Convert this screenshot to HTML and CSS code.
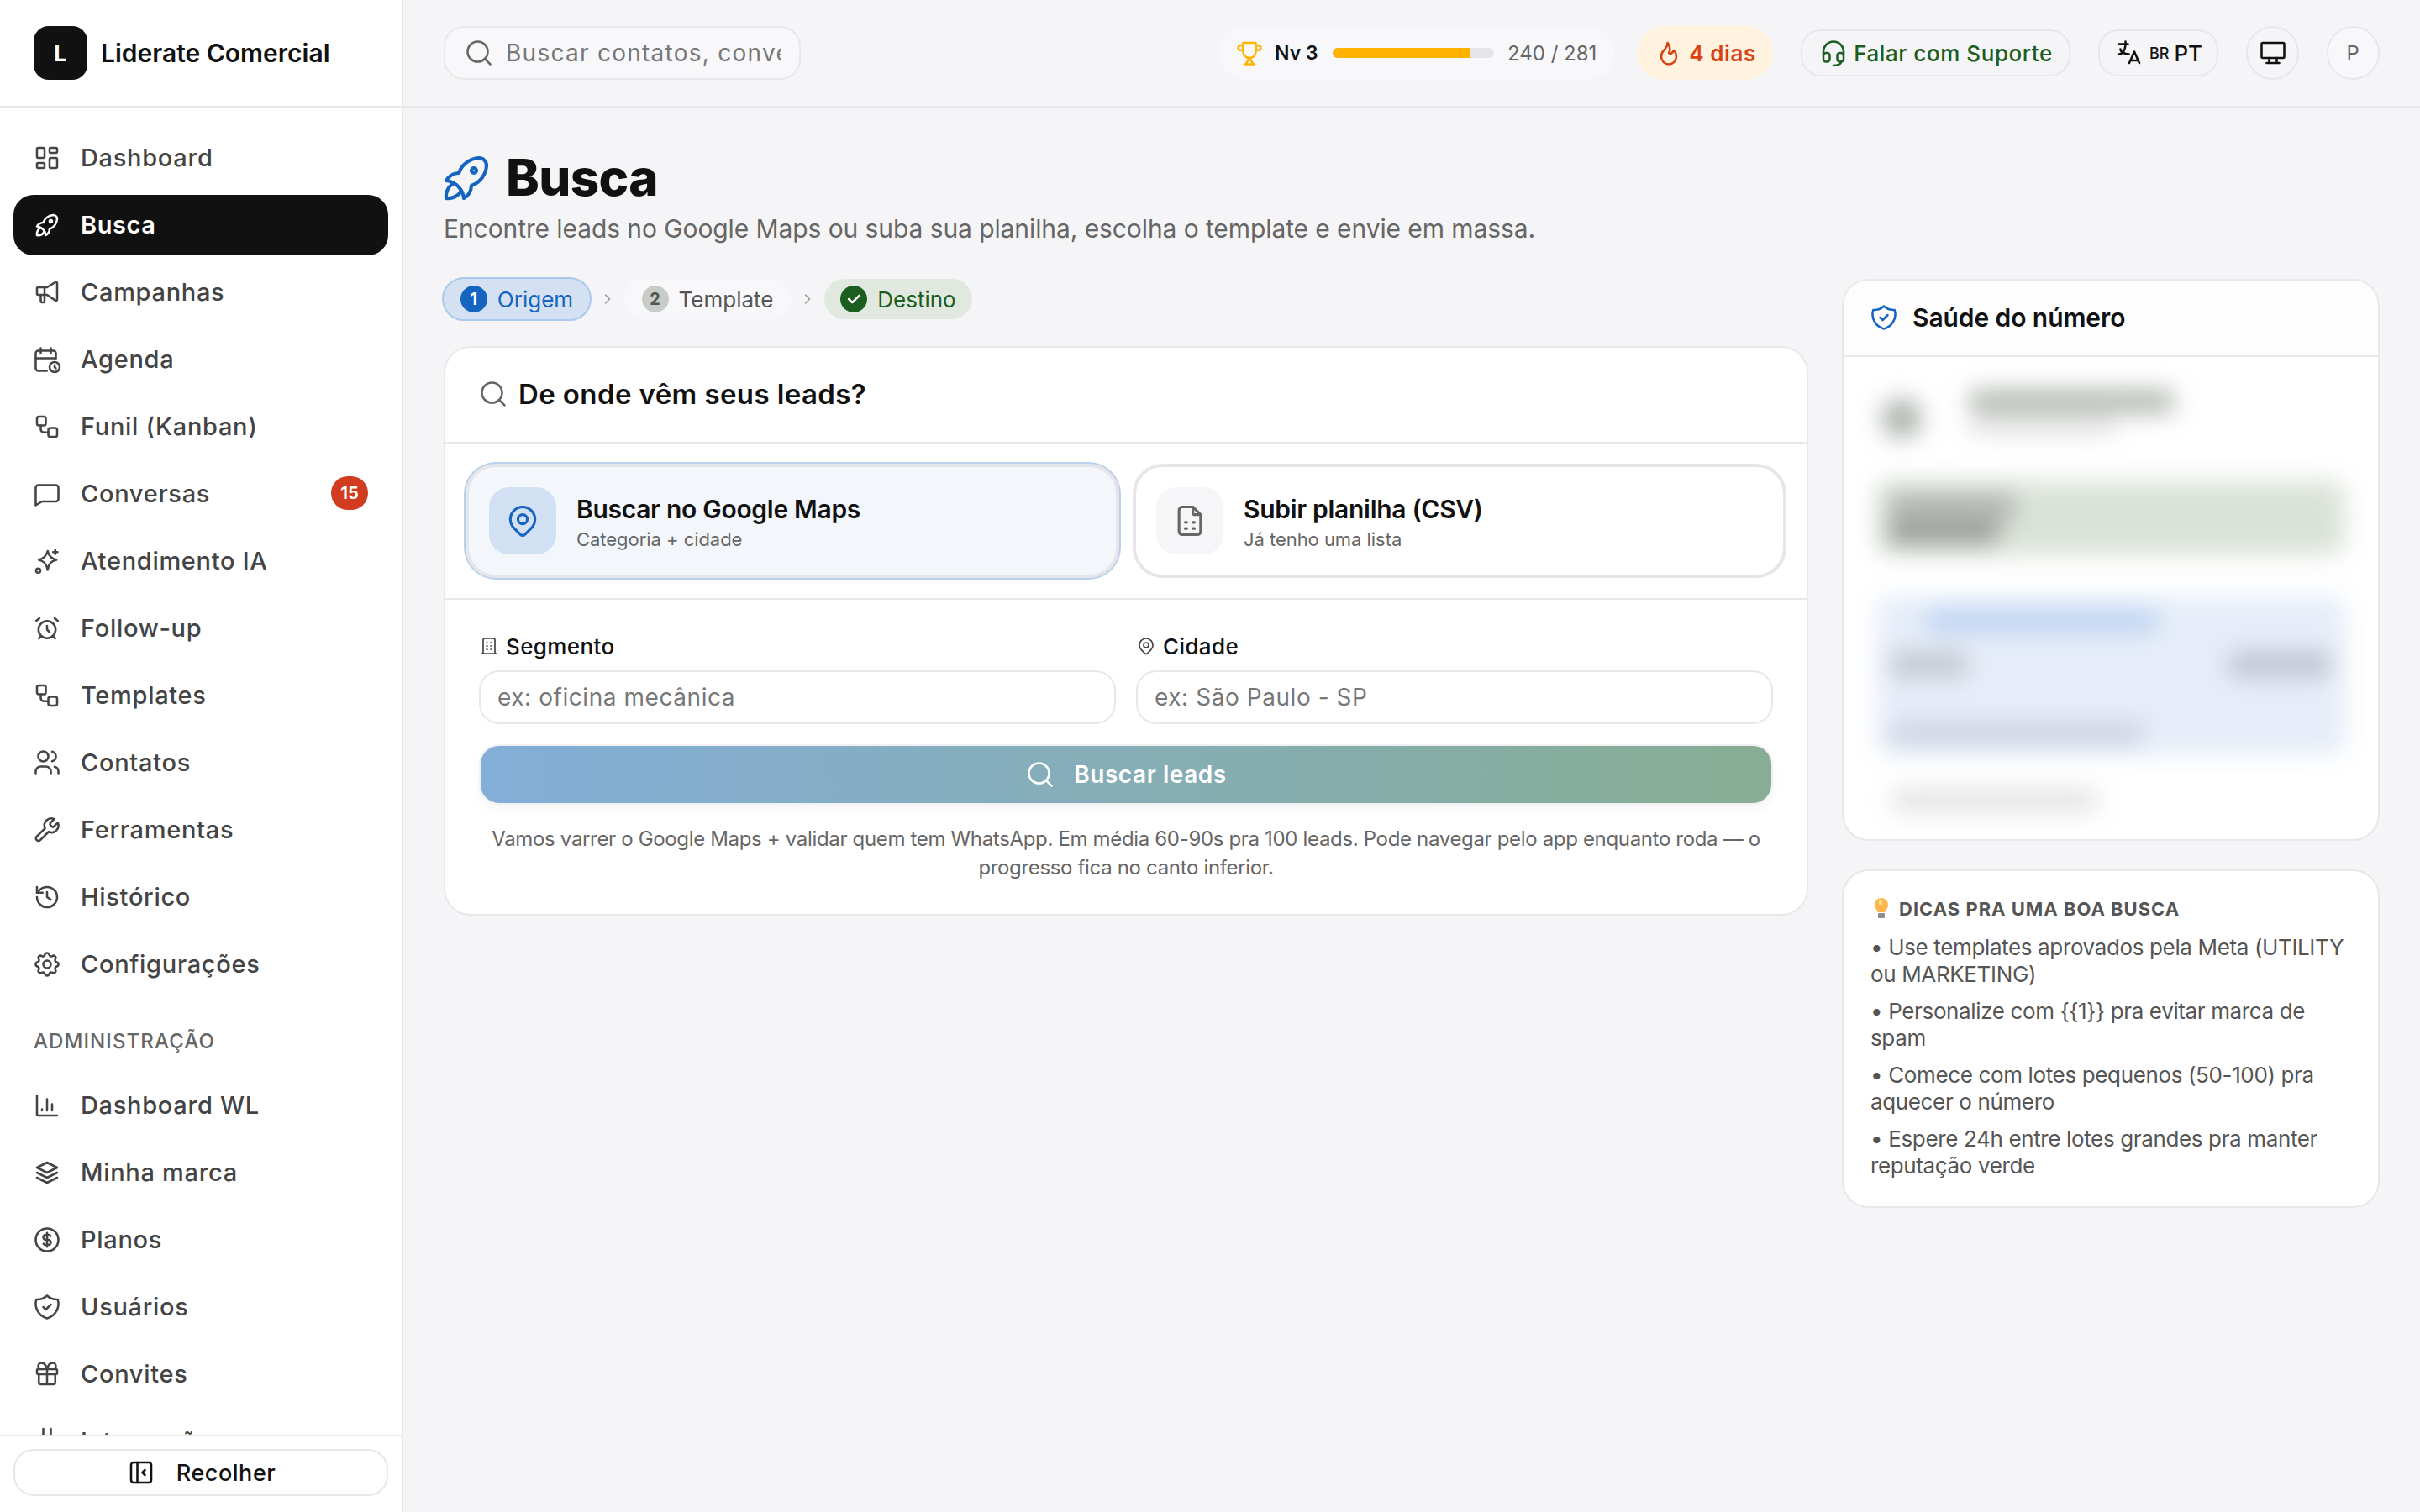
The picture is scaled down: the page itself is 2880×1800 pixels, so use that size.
FILE: index.html
```html
<!DOCTYPE html>
<html lang="pt-BR">
<head>
    <meta charset="UTF-8">
    <title>Busca - Liderate Comercial</title>
    <link rel="stylesheet" href="styles.css">
</head>
<body>
    <svg class="sprite" xmlns="http://www.w3.org/2000/svg">
        <symbol id="i-dashboard" viewBox="0 0 24 24"><path d="M5 4h4a1 1 0 0 1 1 1v6a1 1 0 0 1-1 1H5a1 1 0 0 1-1-1V5a1 1 0 0 1 1-1M5 16h4a1 1 0 0 1 1 1v2a1 1 0 0 1-1 1H5a1 1 0 0 1-1-1v-2a1 1 0 0 1 1-1M15 12h4a1 1 0 0 1 1 1v6a1 1 0 0 1-1 1h-4a1 1 0 0 1-1-1v-6a1 1 0 0 1 1-1M15 4h4a1 1 0 0 1 1 1v2a1 1 0 0 1-1 1h-4a1 1 0 0 1-1-1V5a1 1 0 0 1 1-1"/></symbol>
        <symbol id="i-rocket" viewBox="0 0 24 24"><path d="M4 13a8 8 0 0 1 7 7a6 6 0 0 0 3-5a9 9 0 0 0 6-8a3 3 0 0 0-3-3a9 9 0 0 0-8 6a6 6 0 0 0-5 3"/><path d="M7 14a6 6 0 0 0-3 6a6 6 0 0 0 6-3"/><circle cx="15" cy="9" r="1"/></symbol>
        <symbol id="i-megaphone" viewBox="0 0 24 24"><path d="M10 8v11a1 1 0 0 1-1 1H8a1 1 0 0 1-1-1v-5"/><path d="M12 8l6.500-4a.9.9 0 0 1 1.500.7v13a.9.9 0 0 1-1.500.7L12 14H5a1 1 0 0 1-1-1V9a1 1 0 0 1 1-1h7"/></symbol>
        <symbol id="i-calendar" viewBox="0 0 24 24"><path d="M11.800 21H5a2 2 0 0 1-2-2V7a2 2 0 0 1 2-2h12a2 2 0 0 1 2 2v4"/><circle cx="18" cy="18" r="4"/><path d="M15 3v4M7 3v4M3 11h16M18 16.500V18l1 1"/></symbol>
        <symbol id="i-flow" viewBox="0 0 24 24"><rect x="4" y="4" width="7" height="7" rx="1.500"/><rect x="13" y="13" width="7" height="7" rx="1.500"/><path d="M7 11v3a2.500 2.500 0 0 0 2.500 2.500H13"/></symbol>
        <symbol id="i-message" viewBox="0 0 24 24"><path d="M21 16a2 2 0 0 1-2 2H8l-5 3V7a2 2 0 0 1 2-2h14a2 2 0 0 1 2 2z"/></symbol>
        <symbol id="i-sparkles" viewBox="0 0 24 24"><path d="M12.500 4c.7 4 2.700 6 7 7-4.300 1-6.300 3-7 8-1-5-3-7-7-8 4-1 6-3 7-7z"/><path d="M18.500 3v3.500M16.800 4.800h3.500"/><circle cx="5" cy="19.500" r="1.700"/></symbol>
        <symbol id="i-alarm" viewBox="0 0 24 24"><circle cx="12" cy="13" r="6.800"/><path d="M12 10v3l2 2M6 4 3.500 6M18 4l2.500 2M7.400 18.300 5.500 20M16.600 18.300 18.500 20"/></symbol>
        <symbol id="i-users" viewBox="0 0 24 24"><circle cx="9" cy="7" r="4"/><path d="M3 21v-2a4 4 0 0 1 4-4h4a4 4 0 0 1 4 4v2M16 3.130a4 4 0 0 1 0 7.750M21 21v-2a4 4 0 0 0-3-3.850"/></symbol>
        <symbol id="i-wrench" viewBox="0 0 24 24"><path d="M14.700 6.800a1 1 0 0 0 0 1.400l1.200 1.200a1 1 0 0 0 1.400 0l3.200-3.200a5.500 5.500 0 0 1-7.300 7.300l-6.600 6.600a1.950 1.950 0 0 1-2.800-2.800l6.600-6.600a5.500 5.500 0 0 1 7.300-7.300l-3.200 3.200z"/></symbol>
        <symbol id="i-history" viewBox="0 0 24 24"><path d="M4 12a8 8 0 1 0 8-8 8.700 8.700 0 0 0-6 2.400L4 8.500"/><path d="M4 4v4.500h4.500M12 8v4l3 2"/></symbol>
        <symbol id="i-settings" viewBox="0 0 24 24"><path d="M10.325 4.317c.426-1.756 2.924-1.756 3.350 0a1.724 1.724 0 0 0 2.573 1.066c1.543-.94 3.310.826 2.370 2.370a1.724 1.724 0 0 0 1.065 2.572c1.756.426 1.756 2.924 0 3.350a1.724 1.724 0 0 0-1.066 2.573c.94 1.543-.826 3.310-2.370 2.370a1.724 1.724 0 0 0-2.572 1.065c-.426 1.756-2.924 1.756-3.350 0a1.724 1.724 0 0 0-2.573-1.066c-1.543.94-3.310-.826-2.370-2.370a1.724 1.724 0 0 0-1.065-2.572c-1.756-.426-1.756-2.924 0-3.350a1.724 1.724 0 0 0 1.066-2.573c-.94-1.543.826-3.310 2.370-2.370c1 .608 2.296.07 2.572-1.065z"/><circle cx="12" cy="12" r="3"/></symbol>
        <symbol id="i-chart" viewBox="0 0 24 24"><path d="M4 4v15a1 1 0 0 0 1 1h15M8 16v-1M12 16V7M16 16v-5"/></symbol>
        <symbol id="i-stack" viewBox="0 0 24 24"><path d="M12 4 4 8l8 4 8-4zM4 12l8 4 8-4M4 16l8 4 8-4"/></symbol>
        <symbol id="i-coin" viewBox="0 0 24 24"><circle cx="12" cy="12" r="9"/><path d="M14.800 9a2 2 0 0 0-1.800-1h-2a2 2 0 1 0 0 4h2a2 2 0 1 1 0 4h-2a2 2 0 0 1-1.800-1M12 6.500v11"/></symbol>
        <symbol id="i-shield" viewBox="0 0 24 24"><path d="M12 3a12 12 0 0 0 8.500 3a12 12 0 0 1-8.500 15a12 12 0 0 1-8.500-15a12 12 0 0 0 8.500-3"/><path d="m9 12 2 2 4-4"/></symbol>
        <symbol id="i-gift" viewBox="0 0 24 24"><rect x="4" y="8" width="16" height="4" rx="1"/><path d="M12 8v12M18.500 12v6.500a1.500 1.500 0 0 1-1.500 1.500H7a1.500 1.500 0 0 1-1.500-1.500V12M7.500 8a2.500 2.500 0 0 1 0-5a4.800 8 0 0 1 4.500 5a4.800 8 0 0 1 4.500-5a2.500 2.500 0 0 1 0 5"/></symbol>
        <symbol id="i-plug" viewBox="0 0 24 24"><path d="M9 2v6M15 2v6M6 8h12v3a6 6 0 0 1-12 0zM12 17v5"/></symbol>
        <symbol id="i-collapse" viewBox="0 0 24 24"><rect x="4" y="4" width="16" height="16" rx="2"/><path d="M9 4v16M15 10l-2 2 2 2"/></symbol>
        <symbol id="i-search" viewBox="0 0 24 24"><circle cx="11" cy="11" r="8"/><path d="m21 21-4.300-4.300"/></symbol>
        <symbol id="i-trophy" viewBox="0 0 24 24"><path d="M8 21h8M12 16l-3 5M12 16l3 5M7 4h10M17 4v7a5 5 0 0 1-10 0V4"/><circle cx="5" cy="8" r="2"/><circle cx="19" cy="8" r="2"/></symbol>
        <symbol id="i-flame" viewBox="0 0 24 24"><path d="M12 12c2-2.960 0-7-1-8c0 3.038-1.773 4.741-3 6c-1.226 1.260-2 3.240-2 5a6 6 0 1 0 12 0c0-1.532-1.056-3.940-2-5c-1.786 3-2.791 3-4 2z"/></symbol>
        <symbol id="i-headset" viewBox="0 0 24 24"><path d="M4 14v-3a8 8 0 1 1 16 0v3M18 19c0 1.657-2.686 3-6 3"/><rect x="4" y="12" width="5" height="7" rx="2"/><rect x="15" y="12" width="5" height="7" rx="2"/></symbol>
        <symbol id="i-language" viewBox="0 0 24 24"><path d="M4 5h7M9 3v2c0 4.418-2.239 8-5 8M5 9c0 2.144 2.952 3.908 6.700 4M12 20l4-9 4 9M19.100 18h-6.200"/></symbol>
        <symbol id="i-monitor" viewBox="0 0 24 24"><rect x="3" y="4" width="18" height="12" rx="1"/><path d="M7 20h10M9 16v4M15 16v4"/></symbol>
        <symbol id="i-pin" viewBox="0 0 24 24"><circle cx="12" cy="11" r="3"/><path d="M17.657 16.657l-4.243 4.243a2 2 0 0 1-2.827 0l-4.244-4.243a8 8 0 1 1 11.314 0z"/></symbol>
        <symbol id="i-sheet" viewBox="0 0 24 24"><path d="M14 3v4a1 1 0 0 0 1 1h4"/><path d="M17 21H7a2 2 0 0 1-2-2V5a2 2 0 0 1 2-2h7l5 5v11a2 2 0 0 1-2 2z"/><path d="M9 13h1M14 13h1M9 17h1M14 17h1"/></symbol>
        <symbol id="i-building" viewBox="0 0 24 24"><path d="M3 21h18M9 8h1M9 12h1M9 16h1M14 8h1M14 12h1M14 16h1M5 21V5a2 2 0 0 1 2-2h10a2 2 0 0 1 2 2v16"/></symbol>
        <symbol id="i-chevron" viewBox="0 0 24 24"><path d="m9 6 6 6-6 6"/></symbol>
        <symbol id="i-check" viewBox="0 0 24 24"><path d="m5 12 5 5 10-10"/></symbol>
    </svg>

    <div class="app">
        <aside class="sidebar">
            <div class="brand">
                <div class="brand-logo">L</div>
                <span class="brand-name">Liderate Comercial</span>
            </div>
            <nav class="nav">
                <a class="nav-item"><svg class="icon"><use href="#i-dashboard"/></svg>Dashboard</a>
                <a class="nav-item active"><svg class="icon"><use href="#i-rocket"/></svg>Busca</a>
                <a class="nav-item"><svg class="icon"><use href="#i-megaphone"/></svg>Campanhas</a>
                <a class="nav-item"><svg class="icon"><use href="#i-calendar"/></svg>Agenda</a>
                <a class="nav-item"><svg class="icon"><use href="#i-flow"/></svg>Funil (Kanban)</a>
                <a class="nav-item"><svg class="icon"><use href="#i-message"/></svg>Conversas<span class="nav-badge">15</span></a>
                <a class="nav-item"><svg class="icon"><use href="#i-sparkles"/></svg>Atendimento IA</a>
                <a class="nav-item"><svg class="icon"><use href="#i-alarm"/></svg>Follow-up</a>
                <a class="nav-item"><svg class="icon"><use href="#i-flow"/></svg>Templates</a>
                <a class="nav-item"><svg class="icon"><use href="#i-users"/></svg>Contatos</a>
                <a class="nav-item"><svg class="icon"><use href="#i-wrench"/></svg>Ferramentas</a>
                <a class="nav-item"><svg class="icon"><use href="#i-history"/></svg>Histórico</a>
                <a class="nav-item"><svg class="icon"><use href="#i-settings"/></svg>Configurações</a>
                <div class="nav-section">ADMINISTRAÇÃO</div>
                <a class="nav-item"><svg class="icon"><use href="#i-chart"/></svg>Dashboard WL</a>
                <a class="nav-item"><svg class="icon"><use href="#i-stack"/></svg>Minha marca</a>
                <a class="nav-item"><svg class="icon"><use href="#i-coin"/></svg>Planos</a>
                <a class="nav-item"><svg class="icon"><use href="#i-shield"/></svg>Usuários</a>
                <a class="nav-item"><svg class="icon"><use href="#i-gift"/></svg>Convites</a>
                <a class="nav-item"><svg class="icon"><use href="#i-plug"/></svg>Integrações</a>
            </nav>
            <div class="sidebar-foot">
                <button class="collapse-btn"><svg class="icon"><use href="#i-collapse"/></svg>Recolher</button>
            </div>
        </aside>

        <div class="content">
            <header class="topbar">
                <label class="top-search">
                    <svg class="icon"><use href="#i-search"/></svg>
                    <input type="text" placeholder="Buscar contatos, conversas...">
                </label>
                <div class="top-actions">
                    <div class="level">
                        <svg class="icon"><use href="#i-trophy"/></svg>
                        <strong>Nv 3</strong>
                        <div class="level-bar"><div class="level-fill" style="width: 85.4%"></div></div>
                        <span>240 / 281</span>
                    </div>
                    <div class="streak"><svg class="icon"><use href="#i-flame"/></svg>4 dias</div>
                    <div class="support"><svg class="icon"><use href="#i-headset"/></svg>Falar com Suporte</div>
                    <div class="lang"><svg class="icon"><use href="#i-language"/></svg><small>BR</small>PT</div>
                    <div class="round-btn"><svg class="icon"><use href="#i-monitor"/></svg></div>
                    <div class="round-btn avatar">P</div>
                </div>
            </header>

            <main class="page">
                <div class="page-title">
                    <svg class="icon"><use href="#i-rocket"/></svg>
                    <h1>Busca</h1>
                </div>
                <p class="page-sub">Encontre leads no Google Maps ou suba sua planilha, escolha o template e envie em massa.</p>

                <div class="columns">
                    <section class="col-main">
                        <div class="steps">
                            <div class="step current"><b>1</b>Origem</div>
                            <svg class="icon step-arrow"><use href="#i-chevron"/></svg>
                            <div class="step"><b>2</b>Template</div>
                            <svg class="icon step-arrow"><use href="#i-chevron"/></svg>
                            <div class="step done"><b><svg class="icon"><use href="#i-check"/></svg></b>Destino</div>
                        </div>

                        <div class="card">
                            <div class="card-head">
                                <svg class="icon"><use href="#i-search"/></svg>
                                <h2>De onde vêm seus leads?</h2>
                            </div>
                            <div class="sources">
                                <div class="source selected">
                                    <div class="source-icon"><svg class="icon"><use href="#i-pin"/></svg></div>
                                    <div>
                                        <div class="source-title">Buscar no Google Maps</div>
                                        <div class="source-sub">Categoria + cidade</div>
                                    </div>
                                </div>
                                <div class="source">
                                    <div class="source-icon"><svg class="icon"><use href="#i-sheet"/></svg></div>
                                    <div>
                                        <div class="source-title">Subir planilha (CSV)</div>
                                        <div class="source-sub">Já tenho uma lista</div>
                                    </div>
                                </div>
                            </div>
                            <div class="form">
                                <div class="fields">
                                    <div>
                                        <label class="field-label"><svg class="icon"><use href="#i-building"/></svg>Segmento</label>
                                        <input class="field" type="text" placeholder="ex: oficina mecânica">
                                    </div>
                                    <div>
                                        <label class="field-label"><svg class="icon"><use href="#i-pin"/></svg>Cidade</label>
                                        <input class="field" type="text" placeholder="ex: São Paulo - SP">
                                    </div>
                                </div>
                                <button class="search-btn"><svg class="icon"><use href="#i-search"/></svg>Buscar leads</button>
                                <p class="form-note">Vamos varrer o Google Maps + validar quem tem WhatsApp. Em média 60-90s pra 100 leads. Pode navegar pelo app enquanto roda — o progresso fica no canto inferior.</p>
                            </div>
                        </div>
                    </section>

                    <aside class="col-side">
                        <div class="card health">
                            <div class="health-head">
                                <svg class="icon"><use href="#i-shield"/></svg>
                                <h3>Saúde do número</h3>
                            </div>
                            <div class="health-body">
                                <div class="h-row">
                                    <div class="h-dot"></div>
                                    <div>
                                        <div class="h-line one"></div>
                                        <div class="h-line two"></div>
                                    </div>
                                </div>
                                <div class="h-green">
                                    <div class="h-block"></div>
                                    <div class="h-block dark"></div>
                                </div>
                                <div class="h-blue">
                                    <div class="h-line blue"></div>
                                    <div class="h-split">
                                        <div class="h-line left"></div>
                                        <div class="h-line right"></div>
                                    </div>
                                    <div class="h-line bottom"></div>
                                </div>
                                <div class="h-line last"></div>
                            </div>
                        </div>

                        <div class="card tips">
                            <div class="tips-title">
                                <svg class="bulb" viewBox="0 0 18 28"><path fill="#ffb74d" d="M9 1a8 8 0 0 0-8 8c0 3.500 2.500 5.500 3.500 9h9c1-3.500 3.500-5.500 3.500-9a8 8 0 0 0-8-8z"/><path fill="#ffe082" d="M6 4h4v5H6z"/><rect fill="#8d8d8d" x="5" y="19" width="8" height="6" rx="1"/></svg>
                                DICAS PRA UMA BOA BUSCA
                            </div>
                            <ul class="tips-list">
                                <li>• Use templates aprovados pela Meta (UTILITY ou MARKETING)</li>
                                <li>• Personalize com {{1}} pra evitar marca de spam</li>
                                <li>• Comece com lotes pequenos (50-100) pra aquecer o número</li>
                                <li>• Espere 24h entre lotes grandes pra manter reputação verde</li>
                            </ul>
                        </div>
                    </aside>
                </div>
            </main>
        </div>
    </div>
</body>
</html>
```

FILE: styles.css
```css
* {
    box-sizing: border-box;
}
html, body {
    height: 100%;
}
body {
    margin: 0;
    background-color: #f5f5f7;
    color: #111;
    font-family: Inter, "Noto Sans", sans-serif;
    letter-spacing: 0.035em;
    overflow: hidden;
}
input, button {
    font-family: inherit;
    letter-spacing: inherit;
}
h1, h2, h3, p, ul {
    margin: 0;
    padding: 0;
}
.sprite {
    display: none;
}
.icon {
    width: 36px;
    height: 36px;
    flex: none;
    fill: none;
    stroke: currentColor;
    stroke-width: 1.7;
    stroke-linecap: round;
    stroke-linejoin: round;
}
.app {
    display: flex;
    height: 1800px;
}

/* sidebar */
.sidebar {
    width: 480px;
    flex: none;
    display: flex;
    flex-direction: column;
    background-color: #fff;
    border-right: 2px solid #e8e8ea;
}
.brand {
    height: 128px;
    flex: none;
    display: flex;
    align-items: center;
    gap: 16px;
    padding-left: 40px;
    border-bottom: 2px solid #e8e8ea;
}
.brand-logo {
    width: 64px;
    height: 64px;
    display: flex;
    align-items: center;
    justify-content: center;
    background-color: #111;
    color: #fff;
    border-radius: 18px;
    font-size: 26px;
    font-weight: 700;
}
.brand-name {
    font-size: 30px;
    font-weight: 600;
    letter-spacing: 0;
}
.nav {
    flex: 1;
    min-height: 0;
    overflow: hidden;
    display: flex;
    flex-direction: column;
    gap: 8px;
    padding: 24px 16px 0;
}
.nav-item {
    height: 72px;
    flex: none;
    display: flex;
    align-items: center;
    gap: 22px;
    padding: 0 24px 2px 22px;
    border-radius: 24px;
    color: #444;
    font-size: 29px;
    font-weight: 500;
    letter-spacing: 0.024em;
}
.nav-item .icon {
    margin-top: 2px;
}
.nav-item.active {
    background-color: #111;
    color: #fff;
    font-weight: 600;
    letter-spacing: 0.02em;
}
.nav-badge {
    margin-left: auto;
    width: 44px;
    height: 40px;
    display: flex;
    align-items: center;
    justify-content: center;
    border-radius: 20px;
    background-color: #d13b1f;
    color: #fff;
    font-size: 20px;
    font-weight: 700;
    letter-spacing: 0;
}
.nav-section {
    flex: none;
    margin: 24px 0 8px;
    padding-left: 24px;
    line-height: 48px;
    color: #666;
    font-size: 24px;
    font-weight: 500;
    letter-spacing: 0.045em;
}
.sidebar-foot {
    flex: none;
    height: 92px;
    padding: 15px 16px 0;
    border-top: 2px solid #e8e8ea;
}
.collapse-btn {
    width: 100%;
    height: 56px;
    display: flex;
    align-items: center;
    justify-content: center;
    gap: 24px;
    background-color: #fff;
    border: 2px solid #e8e8ea;
    border-radius: 24px;
    color: #111;
    font-size: 27px;
    font-weight: 500;
    letter-spacing: 0.02em;
}

/* topbar */
.content {
    flex: 1;
    min-width: 0;
}
.topbar {
    height: 128px;
    display: flex;
    align-items: center;
    justify-content: space-between;
    padding: 0 48px;
    border-bottom: 2px solid #e8e8ea;
}
.top-search {
    width: 425px;
    height: 64px;
    display: flex;
    align-items: center;
    gap: 12px;
    padding: 0 20px 0 22px;
    background-color: #f8f8fa;
    border: 2px solid #e8e8ea;
    border-radius: 24px;
    color: #666;
}
.top-search input {
    flex: 1;
    min-width: 0;
    border: none;
    outline: none;
    background: none;
    font-size: 28px;
    letter-spacing: 0.045em;
}
.top-search input::placeholder {
    color: #777;
    opacity: 1;
}
.top-actions {
    display: flex;
    align-items: center;
    gap: 33px;
}
.level {
    width: 470px;
    height: 64px;
    margin-right: -6px;
    display: flex;
    align-items: center;
    padding: 0 18px;
    background-color: #f8f8fa;
    border-radius: 32px;
    font-size: 24px;
    letter-spacing: 0;
}
.level .icon {
    color: #ffb300;
}
.level strong {
    width: 53px;
    margin-left: 12px;
    font-weight: 600;
    font-size: 23px;
    white-space: nowrap;
}
.level span {
    margin-left: 16px;
    color: #666;
    white-space: nowrap;
}
.level-bar {
    width: 192px;
    height: 12px;
    margin-left: 16px;
    flex: none;
    background-color: #e5e5e7;
    border-radius: 6px;
    overflow: hidden;
}
.level-fill {
    height: 100%;
    background-color: #ffb300;
}
.streak {
    width: 162px;
    height: 64px;
    display: flex;
    align-items: center;
    justify-content: center;
    gap: 6px;
    background-color: #fff3e0;
    border-radius: 32px;
    color: #d84315;
    font-size: 26px;
    font-weight: 600;
}
.support {
    width: 321px;
    height: 56px;
    display: flex;
    align-items: center;
    justify-content: center;
    gap: 6px;
    border: 2px solid #e8e8ea;
    border-radius: 24px;
    color: #1b5e20;
    font-size: 26px;
    font-weight: 500;
    white-space: nowrap;
}
.lang {
    width: 143px;
    height: 56px;
    display: flex;
    align-items: center;
    justify-content: center;
    gap: 6px;
    border: 2px solid #e8e8ea;
    border-radius: 24px;
    font-size: 26px;
    font-weight: 500;
    letter-spacing: 0;
}
.lang small {
    font-size: 18px;
}
.round-btn {
    width: 63px;
    height: 64px;
    display: flex;
    align-items: center;
    justify-content: center;
    border: 2px solid #e8e8ea;
    border-radius: 32px;
}
.avatar {
    color: #666;
    font-size: 24px;
    background-color: #f8f8fa;
}

/* page */
.page {
    padding: 48px 48px 0;
}
.page-title {
    height: 72px;
    display: flex;
    align-items: center;
    gap: 11px;
}
.page-title .icon {
    width: 72px;
    height: 72px;
    margin-left: -9px;
    stroke-width: 1.4;
    color: #1565c0;
}
.page-title h1 {
    margin-top: -2px;
    font-size: 60px;
    font-weight: 800;
    letter-spacing: -0.01em;
}
.page-sub {
    margin-top: 2px;
    line-height: 44px;
    color: #666;
    font-size: 30px;
    letter-spacing: -0.003em;
}
.columns {
    display: grid;
    grid-template-columns: 1624px 640px;
    gap: 40px;
    margin-top: 36px;
    align-items: start;
}
.steps {
    display: flex;
    align-items: center;
    height: 52px;
    margin-bottom: 30px;
    margin-left: -2px;
}
.step {
    height: 48px;
    display: flex;
    align-items: center;
    justify-content: center;
    gap: 12px;
    width: 200px;
    background-color: #f8f8fa;
    border-radius: 24px;
    color: #555;
    font-size: 26px;
    letter-spacing: 0;
}
.step b {
    width: 32px;
    height: 32px;
    display: flex;
    align-items: center;
    justify-content: center;
    border-radius: 50%;
    background-color: #c8ccc9;
    color: #555;
    font-size: 20px;
    font-weight: 700;
}
.step.current {
    width: 178px;
    height: 52px;
    background-color: #d3e1f3;
    border: 2px solid #abc9ec;
    border-radius: 26px;
    color: #1565c0;
}
.step.current b {
    background-color: #1565c0;
    color: #fff;
}
.step.done {
    width: 176px;
    margin-left: 1px;
    background-color: #e0e8e0;
    color: #1b5e20;
}
.step.done b {
    background-color: #1b5e20;
    color: #fff;
}
.step.done .icon {
    width: 20px;
    height: 20px;
    stroke-width: 3;
}
.step-arrow {
    width: 20px;
    height: 20px;
    margin: 0 9px;
    color: #999;
}
.card {
    background-color: #fff;
    border: 2px solid #e8e8ea;
    border-radius: 32px;
    overflow: hidden;
}
.card-head {
    height: 114px;
    display: flex;
    align-items: center;
    gap: 12px;
    padding: 0 0 2px 39px;
    border-bottom: 2px solid #e8e8ea;
}
.card-head .icon {
    color: #666;
}
.card-head h2 {
    font-size: 33px;
    font-weight: 600;
    letter-spacing: 0.012em;
}
.sources {
    display: grid;
    grid-template-columns: 1fr 1fr;
    gap: 16px;
    padding: 24px;
    border-bottom: 2px solid #e8e8ea;
}
.source {
    height: 136px;
    display: flex;
    align-items: center;
    gap: 24px;
    padding: 0 24px;
    border: 4px solid #e6e6e8;
    border-radius: 36px;
}
.source.selected {
    background-color: #f3f6fb;
    box-shadow: 0 0 0 2px #b8d2ee;
}
.source-icon {
    width: 80px;
    height: 80px;
    flex: none;
    display: flex;
    align-items: center;
    justify-content: center;
    background-color: #f6f6f8;
    border-radius: 24px;
    color: #666;
}
.source-icon .icon {
    width: 44px;
    height: 44px;
}
.source.selected .source-icon {
    background-color: #d2e0f3;
    color: #1565c0;
}
.source-title {
    margin-top: 2px;
    font-size: 30px;
    font-weight: 600;
    letter-spacing: -0.01em;
}
.source-sub {
    margin-top: 5px;
    color: #666;
    font-size: 22px;
    letter-spacing: -0.002em;
}
.form {
    padding: 39px 40px 38px;
}
.fields {
    display: grid;
    grid-template-columns: 1fr 1fr;
    gap: 24px;
}
.field-label {
    height: 32px;
    display: flex;
    align-items: center;
    gap: 8px;
    margin-bottom: 13px;
    font-size: 26px;
    font-weight: 500;
    letter-spacing: 0.015em;
}
.field-label .icon {
    width: 24px;
    height: 24px;
    color: #444;
}
.field {
    width: 100%;
    height: 64px;
    padding: 0 20px;
    border: 2px solid #e8e8ea;
    border-radius: 24px;
    outline: none;
    font-size: 28px;
}
.field::placeholder {
    color: #777;
    opacity: 1;
}
.search-btn {
    width: 100%;
    height: 72px;
    margin-top: 24px;
    display: flex;
    align-items: center;
    justify-content: center;
    gap: 22px;
    border: 2px solid #f1f1f3;
    border-radius: 24px;
    background: linear-gradient(90deg, #83aed8, #88ad94);
    box-shadow: 0 6px 12px rgba(0, 0, 0, 0.04);
    color: #fff;
    font-size: 28px;
    font-weight: 600;
}
.form-note {
    margin-top: 24px;
    line-height: 34px;
    color: #666;
    font-size: 24px;
    text-align: center;
    letter-spacing: -0.014em;
}

/* side column */
.col-side {
    padding-top: 2px;
    display: flex;
    flex-direction: column;
    gap: 34px;
}
.health-head {
    height: 91px;
    display: flex;
    align-items: center;
    gap: 16px;
    padding: 0 0 2px 30px;
    background-color: #fdfdfe;
    border-bottom: 2px solid #e8e8ea;
}
.health-head .icon {
    color: #1565c0;
}
.health-head h3 {
    font-size: 30px;
    font-weight: 600;
    letter-spacing: -0.003em;
}
.health-body {
    height: 574px;
    padding: 33px 39px 0;
    filter: blur(14px);
}
.h-row {
    height: 80px;
    display: flex;
}
.h-dot {
    width: 48px;
    height: 48px;
    margin: 16px 55px 0 6px;
    border-radius: 50%;
    background-color: #adb4ae;
}
.h-line {
    height: 28px;
    border-radius: 14px;
}
.h-line.one {
    width: 247px;
    height: 30px;
    margin-top: 5px;
    background-color: #b6bcb6;
}
.h-line.two {
    width: 177px;
    height: 20px;
    margin-top: 4px;
    background-color: #e2e2e2;
}
.h-green {
    height: 89px;
    margin-top: 34px;
    padding: 15px;
    border-radius: 16px;
    background-color: #dbe3d9;
}
.h-block {
    width: 150px;
    height: 34px;
    background-color: #b2b6b2;
}
.h-block.dark {
    width: 130px;
    height: 24px;
    margin-top: 2px;
    background-color: #939895;
}
.h-blue {
    height: 188px;
    margin-top: 49px;
    padding: 15px 15px 0;
    border-radius: 16px;
    background-color: #e6edf8;
}
.h-line.blue {
    width: 280px;
    margin-left: 42px;
    background-color: #bdd4f2;
}
.h-split {
    display: flex;
    justify-content: space-between;
    margin-top: 23px;
}
.h-line.left {
    width: 95px;
    height: 30px;
    background-color: #c2c8d0;
}
.h-line.right {
    width: 125px;
    height: 30px;
    background-color: #bfc4cf;
}
.h-line.bottom {
    width: 305px;
    margin-top: 54px;
    background-color: #cdd4e1;
}
.h-line.last {
    width: 250px;
    margin: 41px 0 0 16px;
    background-color: #e2e4e2;
}
.tips {
    height: 403px;
    padding: 27px 32px 0;
}
.tips-title {
    height: 36px;
    display: flex;
    align-items: center;
    gap: 12px;
    color: #555;
    font-size: 22px;
    font-weight: 700;
    letter-spacing: 0.045em;
}
.bulb {
    width: 18px;
    height: 28px;
    margin-left: 4px;
}
.tips-list {
    margin-top: 12px;
    list-style: none;
    display: flex;
    flex-direction: column;
    gap: 12px;
    color: #555;
    font-size: 26px;
    line-height: 32px;
    letter-spacing: -0.014em;
}
```
